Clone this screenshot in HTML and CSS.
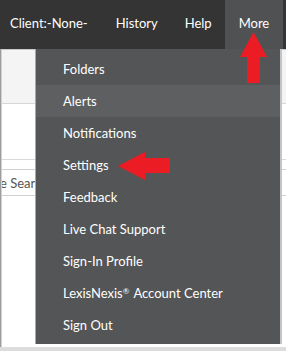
FILE: index.html
```html
<!DOCTYPE html>
<html>
<head>
<meta charset="utf-8">
<link rel="stylesheet" href="styles.css">
</head>
<body>
<div class="screen">
  <header class="topnav">
    <span class="nav-item client">Client:-None-</span>
    <span class="nav-item history">History</span>
    <span class="nav-item help">Help</span>
    <span class="nav-item more">More</span>
  </header>
  <div class="page">
    <div class="page-left">
      <div class="band"></div>
      <div class="gap1"></div>
      <div class="rule"></div>
      <div class="search"><span class="search-text">e Search</span></div>
    </div>
  </div>
  <div class="bottom-strip"></div>

  <ul class="dropdown">
    <li class="menu-item">Folders</li>
    <li class="menu-item hovered">Alerts</li>
    <li class="menu-item">Notifications</li>
    <li class="menu-item">Settings</li>
    <li class="menu-item">Feedback</li>
    <li class="menu-item">Live Chat Support</li>
    <li class="menu-item">Sign-In Profile</li>
    <li class="menu-item">LexisNexis<sup class="reg">®</sup>Account Center</li>
    <li class="menu-item">Sign Out</li>
  </ul>

  <svg class="arrow arrow-up" width="27" height="51" viewBox="0 0 27 51">
    <polygon points="13.5,0 27,25 20,25 20,51 7,51 7,25 0,25" fill="#ec1c24"/>
  </svg>
  <svg class="arrow arrow-left" width="52" height="28" viewBox="0 0 52 28">
    <polygon points="0,14 27,0 27,6 52,6 52,21 27,21 27,28" fill="#ec1c24"/>
  </svg>
</div>
</body>
</html>
```

FILE: styles.css
```css
* { box-sizing: border-box; }
html, body { margin: 0; padding: 0; }
body {
  width: 286px;
  height: 351px;
  overflow: hidden;
  background: #ffffff;
  font-family: Lato, "Open Sans", sans-serif;
}
.screen {
  position: relative;
  width: 286px;
  height: 351px;
  display: flex;
  flex-direction: column;
}
.topnav {
  height: 49px;
  flex: 0 0 49px;
  background: #343434;
  display: flex;
  align-items: stretch;
  padding-left: 10px;
  padding-right: 6px;
  white-space: nowrap;
}
.nav-item {
  color: #ffffff;
  font-size: 13px;
  display: flex;
  align-items: center;
  padding-bottom: 3px;
  white-space: nowrap;
}
.client { margin-right: 28px; }
.history { margin-right: 27px; }
.help { margin-right: 13px; }
.more {
  background: #505152;
  padding: 0 14px 3px 14px;
  margin-left: auto;
}
.page {
  flex: 1;
  display: flex;
  border-left: 1px solid #9c9c9c;
}
.page-left {
  flex: 1;
  border-top: 1px solid #c9c9c9;
  border-left: 1px solid #d2d2d2;
  display: flex;
  flex-direction: column;
  overflow: hidden;
}
.band {
  height: 54px;
  background: #f4f4f4;
  border-bottom: 1px solid #d6d6d6;
}
.gap1 { height: 55px; }
.rule {
  height: 10px;
  border-top: 1px solid #d9d9d9;
}
.search {
  height: 27px;
  border-top: 1px solid #d0d0d0;
  border-bottom: 1px solid #d0d0d0;
  display: flex;
  align-items: center;
  white-space: nowrap;
}
.search-text {
  font-size: 13px;
  color: #555555;
  margin-left: -2px;
}
.bottom-strip {
  height: 4px;
  flex: 0 0 4px;
  background: #dcdcdc;
}
.dropdown {
  position: absolute;
  left: 36px;
  top: 49px;
  width: 244px;
  height: 295px;
  margin: 0;
  padding: 4px 0 0 0;
  list-style: none;
  background: #545556;
  box-shadow: 2px 0 0 #c4c4c4, -1px 0 0 #a9a9a9;
}
.menu-item {
  height: 32px;
  padding-left: 27px;
  display: flex;
  align-items: center;
  color: #ffffff;
  font-size: 13px;
  white-space: nowrap;
}
.menu-item.hovered { background: #5e5f60; }
.reg {
  font-size: 8px;
  align-self: flex-start;
  margin-top: 9px;
  margin-left: 0;
  margin-right: 4px;
}
.arrow { position: absolute; }
.arrow-up { left: 240px; top: 32px; }
.arrow-left { left: 118px; top: 152px; }
```
